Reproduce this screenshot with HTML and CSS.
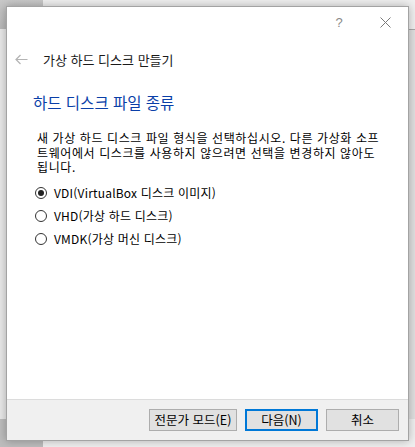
FILE: index.html
```html
<!DOCTYPE html>
<html lang="ko">
<head>
<meta charset="utf-8">
<link rel="stylesheet" href="styles.css">
</head>
<body>
<div class="desk">
  <div class="bg-corner"></div>
  <div class="bg-left"></div>
  <div class="bg-right"></div>
  <div class="bg-bottom"></div>

  <div class="dialog">
    <div class="titlebar">
      <span class="tb-btn">?</span>
      <span class="tb-btn">
        <svg width="11" height="11" viewBox="0 0 11 11"><path d="M0.5 0.5 L10.5 10.5 M10.5 0.5 L0.5 10.5" stroke="#7a7a7a" stroke-width="1" fill="none"/></svg>
      </span>
    </div>
    <div class="header">
      <svg class="back" width="13" height="11" viewBox="0 0 13 11"><path d="M1 5.5 H12.5 M5.5 1 L1 5.5 L5.5 10" stroke="#b4b4b4" stroke-width="1.2" fill="none"/></svg>
      <span class="title">가상 하드 디스크 만들기</span>
    </div>
    <div class="content">
      <h1 class="heading">하드 디스크 파일 종류</h1>
      <p class="desc"><span class="ln">새 가상 하드 디스크 파일 형식을 선택하십시오. 다른 가상화 소프</span><span class="ln">트웨어에서 디스크를 사용하지 않으려면 선택을 변경하지 않아도</span><span class="ln">됩니다.</span></p>
      <div class="options">
        <label class="opt"><span class="radio checked"></span>VDI(VirtualBox 디스크 이미지)</label>
        <label class="opt"><span class="radio"></span>VHD(가상 하드 디스크)</label>
        <label class="opt"><span class="radio"></span>VMDK(가상 머신 디스크)</label>
      </div>
    </div>
    <div class="footer">
      <button class="btn wide">전문가 모드(E)</button>
      <button class="btn primary">다음(N)</button>
      <button class="btn">취소</button>
    </div>
  </div>
</div>
</body>
</html>
```

FILE: styles.css
```css
* { box-sizing: border-box; }
html, body { margin: 0; padding: 0; }
body {
  width: 415px;
  height: 447px;
  overflow: hidden;
  background: #f0f0f0;
  font-family: "Noto Sans CJK KR", "Liberation Sans", sans-serif;
  color: #000;
}
.desk { position: relative; width: 415px; height: 447px; }

.bg-corner {
  position: absolute; left: 0; top: 0; width: 43px; height: 29px;
  background: linear-gradient(#c9c9c9, #b8b8b8);
}
.bg-left {
  position: absolute; left: 0; top: 29px; width: 8px; height: 390px;
  background: #e9e9e9;
  border-right: 1px solid #d0d0d0;
}
.bg-right {
  position: absolute; right: 0; top: 29px; width: 8px; height: 390px;
  background: #e0e0e0;
  border-top: 1px solid #a8a8a8;
}
.bg-bottom {
  position: absolute; left: 0; top: 419px; width: 43px; height: 28px;
  background: #bdbdbd;
}

.dialog {
  position: absolute;
  left: 6px; top: 6px;
  width: 403px; height: 435px;
  background: #fff;
  border: 1px solid #a3a3a3;
  box-shadow: 0 0 9px rgba(0,0,0,0.28);
  display: flex;
  flex-direction: column;
}

.titlebar {
  height: 30px;
  display: flex;
  justify-content: flex-end;
}
.tb-btn {
  width: 46px;
  height: 30px;
  display: flex;
  align-items: center;
  justify-content: center;
  color: #8a8a8a;
  font-family: "Liberation Sans", sans-serif;
  font-size: 13px;
}

.header {
  height: 44px;
  display: flex;
  align-items: center;
  padding-left: 8px;
}
.back { margin-right: 15px; }
.title { font-size: 13px; color: #1a1a1a; }

.content {
  flex: 1;
  padding: 10px 8px 0 26px;
}
.heading {
  margin: 0;
  font-weight: normal;
  font-size: 15.5px;
  line-height: 22px;
  color: #0a3fa8;
}
.desc {
  margin: 18px 0 0 4px;
  display: flex;
  flex-direction: column;
  white-space: nowrap;
  font-size: 12px;
  letter-spacing: 0.6px;
}
.ln {
  display: block;
  height: 14.5px;
  line-height: 14.5px;
  overflow: visible;
}
.options {
  margin-top: 10px;
  display: flex;
  flex-direction: column;
  gap: 7px;
}
.opt {
  display: flex;
  align-items: center;
  height: 16px;
  font-size: 12px;
  letter-spacing: 0.2px;
  padding-left: 2px;
}
.radio {
  width: 12px; height: 12px;
  border: 1px solid #333;
  border-radius: 50%;
  margin-right: 7px;
  display: flex;
  align-items: center;
  justify-content: center;
  background: #fff;
}
.radio.checked::after {
  content: "";
  width: 6px; height: 6px;
  border-radius: 50%;
  background: #222;
}

.footer {
  height: 41px;
  background: #f0f0f0;
  border-top: 1px solid #dcdcdc;
  display: flex;
  justify-content: flex-end;
  align-items: flex-start;
  padding: 9px 9px 0 0;
  gap: 8px;
}
.btn {
  width: 73px;
  height: 22px;
  background: #e1e1e1;
  border: 1px solid #adadad;
  font-family: "Noto Sans CJK KR", "Liberation Sans", sans-serif;
  font-size: 12.5px;
  color: #000;
  padding: 0;
  line-height: 18px;
}
.btn.wide { width: 88px; }
.btn.primary { border: 2px solid #0078d7; }
```
